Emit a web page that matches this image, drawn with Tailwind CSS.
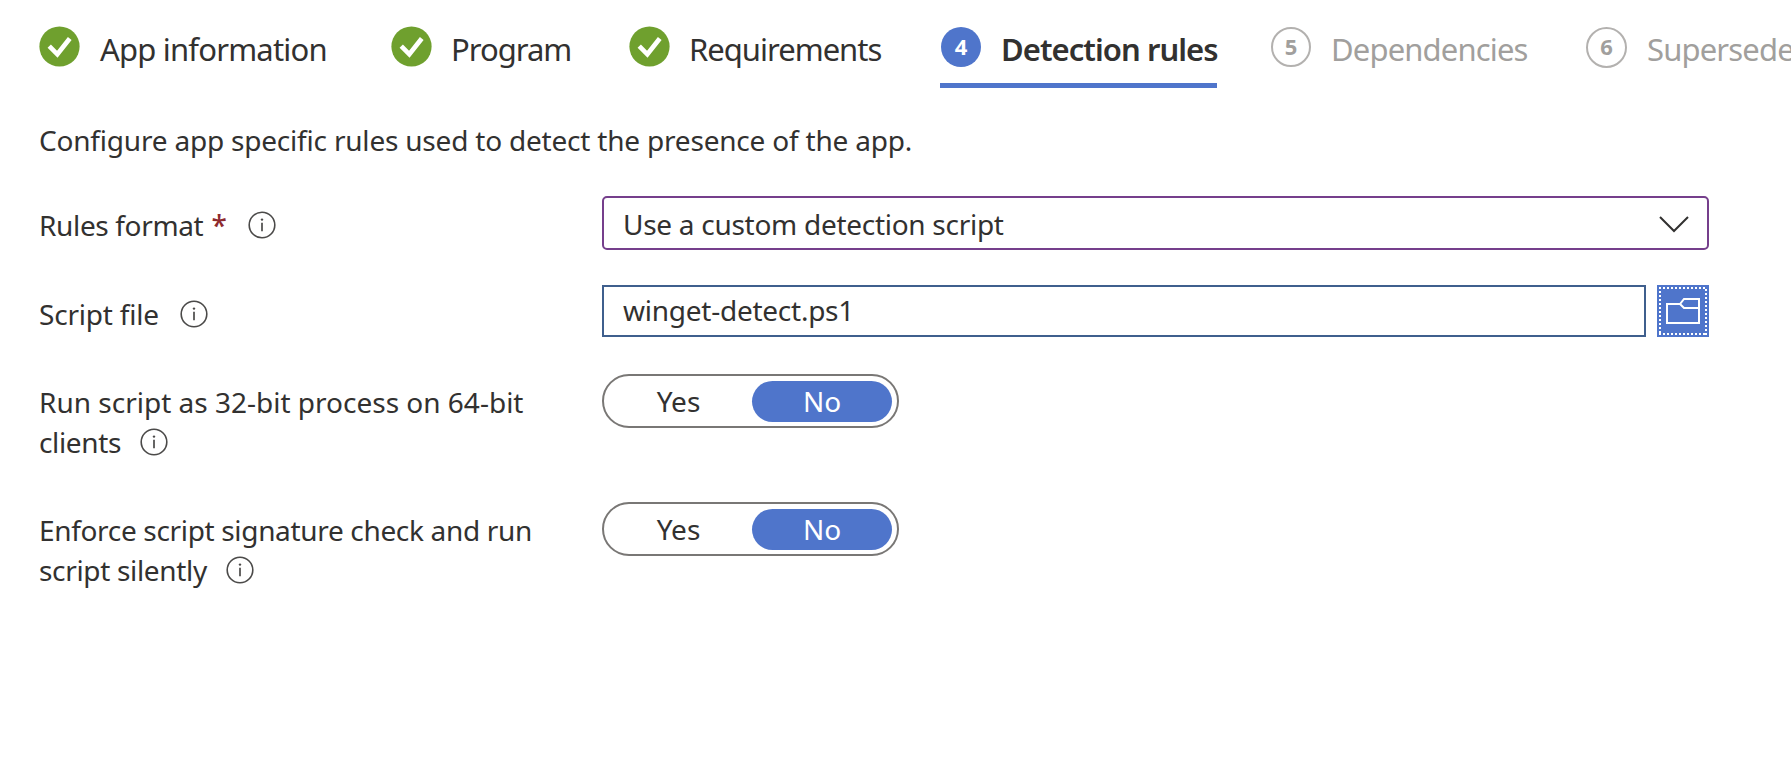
<!DOCTYPE html>
<html lang="en">
<head>
	<meta charset="UTF-8">
	<meta name="viewport" content="width=device-width, initial-scale=1.0">
	<title>Add App</title>
	<script src="https://cdn.jsdelivr.net/npm/@tailwindcss/browser@4"></script>
</head>
<body class="bg-white w-screen h-screen overflow-hidden font-['Noto_Sans',sans-serif] text-[28px] leading-[40px] text-[#323130]">
	<svg class="hidden">
		<symbol id="check" viewBox="0 0 42 42">
			<circle cx="21" cy="21" r="20.6" fill="#6fa02e"/>
			<path d="M10.5 20.6l8.3 8.4L31.5 12.8" fill="none" stroke="#fff" stroke-width="4.8"/>
		</symbol>
		<symbol id="info" viewBox="0 0 28 28">
			<circle cx="14" cy="14" r="12.8" fill="none" stroke="#4b4a49" stroke-width="1.6"/>
			<path d="M14 11.7v8.6" fill="none" stroke="#4b4a49" stroke-width="1.7"/>
			<circle cx="14" cy="8.6" r="1.2" fill="#4b4a49"/>
		</symbol>
	</svg>

	<!-- Wizard steps -->
	<nav class="flex h-[88px] pl-[39px] pt-[26px] text-[31px] leading-[47px] whitespace-nowrap">
		<div class="flex w-[352px] shrink-0">
			<svg class="size-[41px] shrink-0 mr-[20px]"><use href="#check"/></svg>
			<span class="tracking-[-0.8px]">App information</span>
		</div>
		<div class="flex w-[238px] shrink-0">
			<svg class="size-[41px] shrink-0 mr-[19px]"><use href="#check"/></svg>
			<span class="tracking-[-1px]">Program</span>
		</div>
		<div class="flex w-[311px] shrink-0">
			<svg class="size-[41px] shrink-0 mr-[19px]"><use href="#check"/></svg>
			<span class="tracking-[-1px]">Requirements</span>
		</div>
		<div class="flex w-[277px] shrink-0 border-b-[5px] border-[#4f75cb]">
			<div class="size-[40px] shrink-0 mt-px ml-px mr-[20px] rounded-full bg-[#4f75cb] text-white text-[22px] leading-[39px] font-bold text-center">4</div>
			<span class="font-semibold tracking-[-0.95px]">Detection rules</span>
		</div>
		<div class="flex w-[315px] ml-[54px] shrink-0 text-[#a19f9d]">
			<div class="size-[40px] shrink-0 mt-px mr-[20px] rounded-full border-2 border-[#b3b1af] text-[22px] leading-[35px] font-bold text-center">5</div>
			<span class="tracking-[-0.85px]">Dependencies</span>
		</div>
		<div class="flex shrink-0 text-[#a19f9d]">
			<div class="size-[41px] shrink-0 mt-px mr-[20px] rounded-full border-2 border-[#b3b1af] text-[22px] leading-[35px] font-bold text-center">6</div>
			<span class="tracking-[-0.85px]">Supersedence</span>
		</div>
	</nav>

	<main class="pl-[39px]">
		<p class="pt-8 tracking-[-0.2px]">Configure app specific rules used to detect the presence of the app.</p>

		<div class="flex h-[89px] mt-[36px]">
			<div class="flex w-[563px] pt-[9px]">
				<span class="tracking-[-0.35px]">Rules format</span>
				<span class="ml-[8px] text-[#8e2a2e] font-medium">*</span>
				<svg class="size-[28px] ml-[21px] mt-[6px]"><use href="#info"/></svg>
			</div>
			<div class="flex items-center justify-between w-[1107px] h-[54px] pl-[19px] pr-[17px] border-2 border-[#753f8c] rounded-[5px]">
				<span class="pt-px tracking-[-0.28px]">Use a custom detection script</span>
				<svg class="w-[32px] h-[18px] mt-[2px]" viewBox="0 0 32 18"><path d="M2 2l14 14L30 2" fill="none" stroke="#323130" stroke-width="2"/></svg>
			</div>
		</div>

		<div class="flex h-[89px]">
			<div class="flex w-[563px] pt-[9px] tracking-[-0.2px]">
				<span>Script file</span>
				<svg class="size-[28px] ml-[21px] mt-[6px]"><use href="#info"/></svg>
			</div>
			<div class="w-[1044px] h-[52px] pl-[19px] border-2 border-[#3f5f8d] leading-[46px] tracking-[-0.25px]">winget-detect.ps1</div>
			<button class="flex items-center justify-center size-[52px] ml-[11px] bg-[#4f75cb]">
				<svg class="size-[52px]" viewBox="0 0 52 52" fill="none" stroke="#fff" stroke-width="2">
					<path d="M2 3H50M49 4V50M48 49H2M3 48V4" stroke-dasharray="2 2"/>
					<path d="M10 19H23L27 14H42V38H10ZM23 19L27 23H42"/>
				</svg>
			</button>
		</div>

		<div class="flex h-[128px]">
			<div class="w-[563px] pt-[8px] whitespace-nowrap">
				<div>Run script as 32-bit process on 64-bit</div>
				<div class="flex">
					<span class="tracking-[-0.35px]">clients</span>
					<svg class="size-[28px] ml-[19px] mt-[6px]"><use href="#info"/></svg>
				</div>
			</div>
			<div class="flex w-[297px] h-[54px] p-[5px] border-2 border-[#797775] rounded-full text-center">
				<div class="w-[143px] pr-[4px]">Yes</div>
				<div class="w-[140px] h-[41px] rounded-full bg-[#4f75cb] text-white">No</div>
			</div>
		</div>

		<div class="flex h-[128px]">
			<div class="w-[563px] pt-[8px] whitespace-nowrap tracking-[-0.33px]">
				<div>Enforce script signature check and run</div>
				<div class="flex">
					<span>script silently</span>
					<svg class="size-[28px] ml-[19px] mt-[6px]"><use href="#info"/></svg>
				</div>
			</div>
			<div class="flex w-[297px] h-[54px] p-[5px] border-2 border-[#797775] rounded-full text-center">
				<div class="w-[143px] pr-[4px]">Yes</div>
				<div class="w-[140px] h-[41px] rounded-full bg-[#4f75cb] text-white">No</div>
			</div>
		</div>
	</main>
</body>
</html>
